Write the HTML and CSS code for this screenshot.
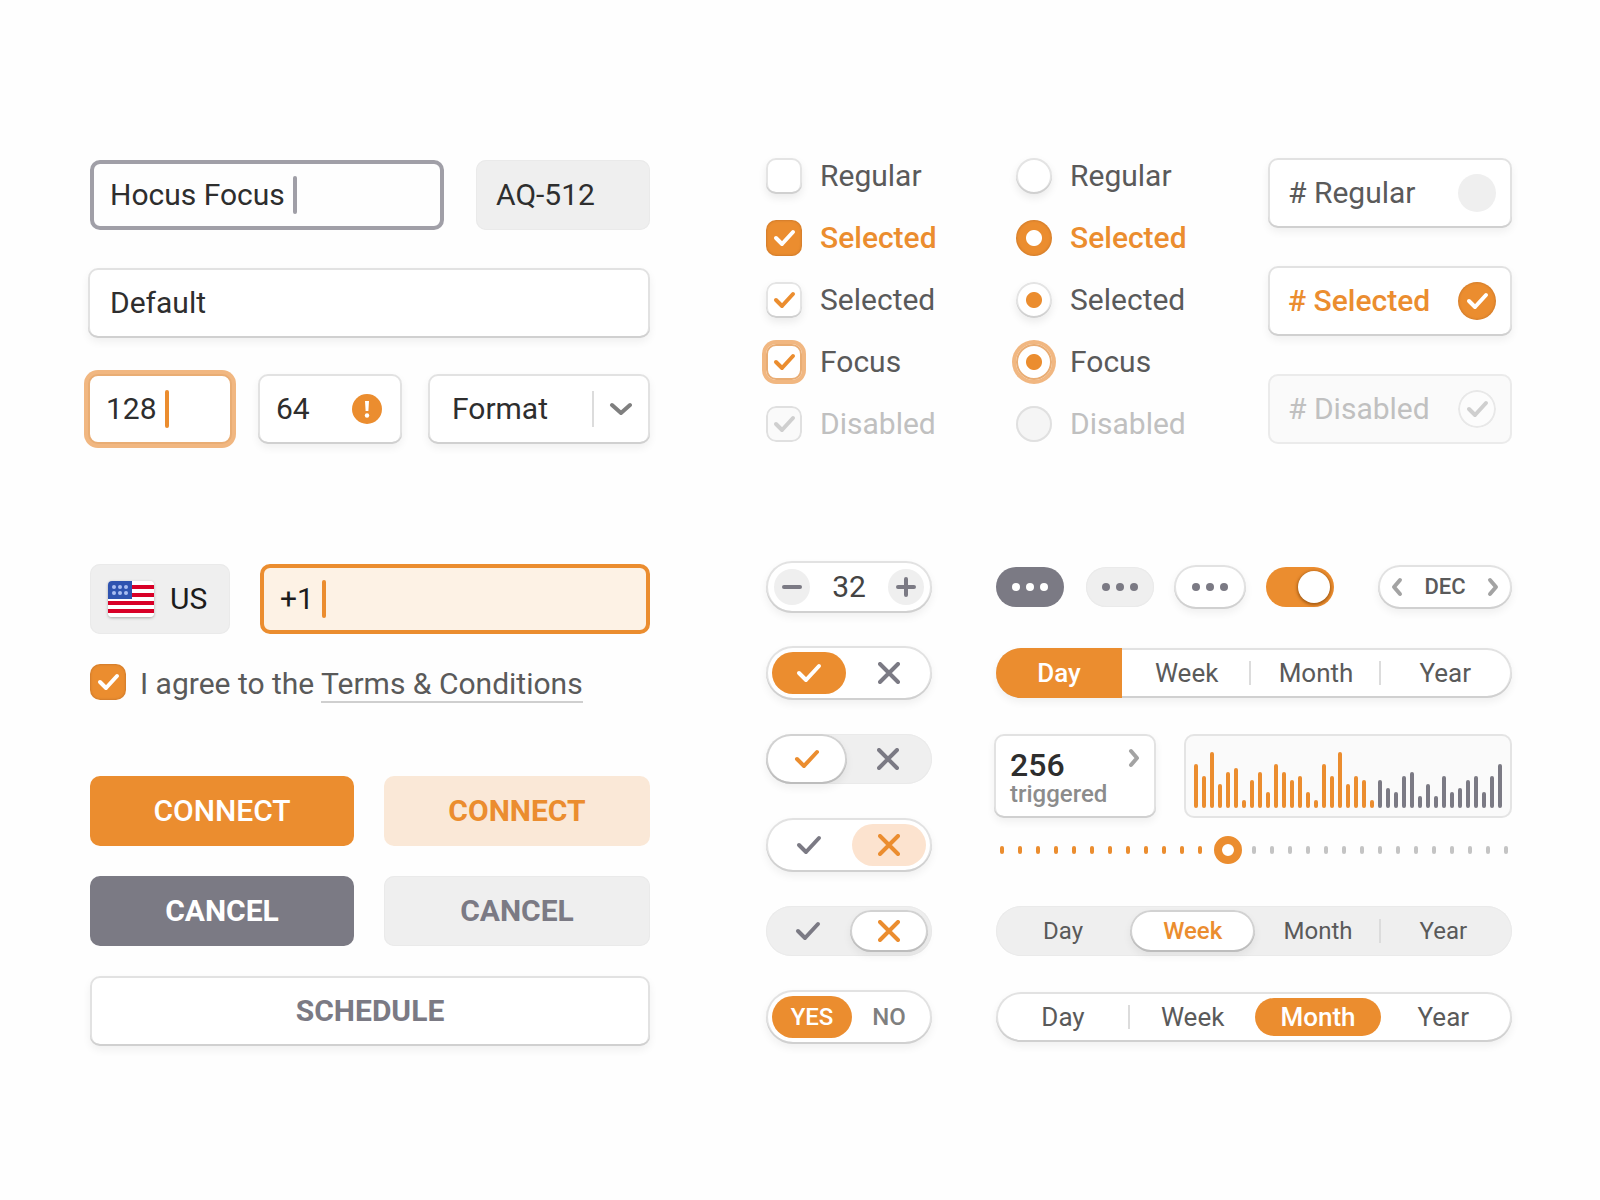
FILE: index.html
```
<!DOCTYPE html>
<html lang="en">
<head>
    <title>Form Controls</title>
    <meta charset="UTF-8">
    <meta name="viewport" content="width=device-width, initial-scale=1">
    <link rel="stylesheet" href="styles.css">
</head>
<body>

<!-- shared icons -->
<svg class="sprite" aria-hidden="true">
    <symbol id="check" viewBox="0 0 26 20"><path d="M3 10l7 7L23 3"/></symbol>
    <symbol id="cross" viewBox="0 0 22 22"><path d="M2 2l18 18M20 2L2 20"/></symbol>
    <symbol id="dots" viewBox="0 0 36 8"><circle cx="4" cy="4" r="4"/><circle cx="18" cy="4" r="4"/><circle cx="32" cy="4" r="4"/></symbol>
</svg>

<main class="page">

    <section class="fields">
        <div class="row row-names">
            <label class="field focus-gray">
                <input type="text" value="Hocus Focus" aria-label="Name">
                <span class="caret"></span>
            </label>
            <input class="input flat" type="text" value="AQ-512" aria-label="Code" readonly>
        </div>
        <input class="input input-wide raised" type="text" value="Default" aria-label="Default">
        <div class="row row-sizes">
            <label class="field raised focus-ring">
                <input type="text" value="128" aria-label="Width">
                <span class="caret"></span>
            </label>
            <label class="field raised invalid">
                <input type="text" value="64" aria-label="Height">
                <svg width="30" height="30" viewBox="0 0 30 30"><circle cx="15" cy="15" r="15" fill="#eb8d2f"/><path d="M13 7h4l-.6 10h-2.8z" fill="#fff"/><circle cx="15" cy="21.500" r="2.200" fill="#fff"/></svg>
            </label>
            <div class="select">
                <select class="input raised" aria-label="Format">
                    <option>Format</option>
                </select>
                <svg width="40" height="36" viewBox="0 0 40 36"><path d="M1 0v36" stroke="#dcdcdc" stroke-width="2"/><path d="M20 14l9 8 9-8" stroke="#7f7f7f" stroke-width="4" stroke-linecap="round" stroke-linejoin="round"/></svg>
            </div>
        </div>
    </section>

    <section class="choices">
        <div class="list">
            <label><input type="checkbox">Regular</label>
            <label class="on"><input class="solid" type="checkbox" checked>Selected</label>
            <label><input type="checkbox" checked>Selected</label>
            <label><input class="focus" type="checkbox" checked>Focus</label>
            <label class="off"><input type="checkbox" checked disabled>Disabled</label>
        </div>
        <div class="list">
            <label><input type="radio" name="r1">Regular</label>
            <label class="on"><input class="solid" type="radio" name="r2" checked>Selected</label>
            <label><input type="radio" name="r3" checked>Selected</label>
            <label><input class="focus" type="radio" name="r4" checked>Focus</label>
            <label class="off"><input type="radio" name="r5" disabled>Disabled</label>
        </div>
        <div class="cards">
            <label class="card raised"># Regular<input type="checkbox"></label>
            <label class="card raised on"># Selected<input type="checkbox" checked></label>
            <label class="card off"># Disabled<input type="checkbox" checked disabled></label>
        </div>
    </section>

    <form class="signup">
        <div class="row row-phone">
            <button class="country flat" type="button">
                <svg class="flag" width="46" height="36" viewBox="0 0 46 36">
                    <rect width="46" height="36" fill="#fff"/>
                    <path d="M0 6h46M0 14h46M0 22h46M0 30h46" stroke="#d80027" stroke-width="4"/>
                    <rect width="24" height="18" fill="#2f53b0"/>
                    <g fill="#a9bdf2"><circle cx="6" cy="6" r="2"/><circle cx="12" cy="6" r="2"/><circle cx="18" cy="6" r="2"/><circle cx="6" cy="12" r="2"/><circle cx="12" cy="12" r="2"/><circle cx="18" cy="12" r="2"/></g>
                </svg>
                US
            </button>
            <label class="field focus-orange">
                <input type="tel" value="+1" aria-label="Phone">
                <span class="caret"></span>
            </label>
        </div>
        <div class="agree">
            <input class="solid" id="agree" type="checkbox" checked>
            <label for="agree">I agree to the <a href="#">Terms &amp; Conditions</a></label>
        </div>
        <div class="buttons">
            <button class="btn btn-orange" type="button">CONNECT</button>
            <button class="btn btn-peach" type="button">CONNECT</button>
            <button class="btn btn-gray" type="button">CANCEL</button>
            <button class="btn btn-light flat" type="button">CANCEL</button>
            <button class="btn btn-wide raised" type="button">SCHEDULE</button>
        </div>
    </form>

    <section class="widgets">
        <div class="stepper raised">
            <button type="button" aria-label="Less"><svg width="20" height="20"><path d="M2 10h16"/></svg></button>
            <output>32</output>
            <button type="button" aria-label="More"><svg width="20" height="20"><path d="M2 10h16M10 2v16"/></svg></button>
        </div>
        <div class="toolbar">
            <button class="more more-dark" type="button" aria-label="More"><svg><use href="#dots"/></svg></button>
            <button class="more flat" type="button" aria-label="More"><svg><use href="#dots"/></svg></button>
            <button class="more more-big raised" type="button" aria-label="More"><svg><use href="#dots"/></svg></button>
            <input class="switch" type="checkbox" aria-label="Switch" checked>
            <div class="month raised">
                <button type="button" aria-label="Previous"><svg width="12" height="20"><path d="M9 3l-6 7 6 7"/></svg></button>
                DEC
                <button type="button" aria-label="Next"><svg width="12" height="20"><path d="M3 3l6 7-6 7"/></svg></button>
            </div>
        </div>

        <div class="toggle raised">
            <button class="pill-orange" type="button" aria-label="Yes"><svg class="check"><use href="#check"/></svg></button>
            <button type="button" aria-label="No"><svg class="cross"><use href="#cross"/></svg></button>
        </div>
        <div class="segments raised">
            <button class="seg-fill" type="button">Day</button>
            <button class="line" type="button">Week</button>
            <button class="line" type="button">Month</button>
            <button type="button">Year</button>
        </div>

        <div class="toggle toggle-flat toggle-left flat">
            <button class="pill-white raised" type="button" aria-label="Yes"><svg class="check"><use href="#check"/></svg></button>
            <button type="button" aria-label="No"><svg class="cross"><use href="#cross"/></svg></button>
        </div>
        <div class="history">
            <a class="stat raised" href="#">
                <strong>256</strong>
                <svg width="12" height="20"><path d="M3 3l6 7-6 7"/></svg>
                <span>triggered</span>
            </a>
            <div class="chart">
                <svg width="308" height="56" viewBox="0 0 308 56">
                    <path stroke="#eb8d2f" d="M2 54V14M10 54V26M18 54V2M26 54V34M34 54V22M42 54V18M50 54V50M58 54V30M66 54V22M74 54V42M82 54V14M90 54V22M98 54V30M106 54V26M114 54V42M122 54V50M130 54V14M138 54V26M146 54V2M154 54V34M162 54V26M170 54V30M178 54V50"/>
                    <path stroke="#7b7a84" d="M186 54V30M194 54V38M202 54V42M210 54V26M218 54V22M226 54V46M234 54V34M242 54V46M250 54V26M258 54V42M266 54V38M274 54V30M282 54V26M290 54V42M298 54V26M306 54V14"/>
                </svg>
            </div>
            <div class="slider">
                <svg width="100%" height="8">
                    <pattern id="done" width="18" height="8" patternUnits="userSpaceOnUse"><rect width="4" height="8" rx="2" fill="#eb8d2f"/></pattern>
                    <pattern id="todo" width="18" height="8" patternUnits="userSpaceOnUse"><rect width="4" height="8" rx="2" fill="#c4c4c4"/></pattern>
                    <rect width="100%" height="8" fill="url(#todo)"/>
                    <rect width="230" height="8" fill="#fefefe"/>
                    <rect width="230" height="8" fill="url(#done)"/>
                </svg>
                <input type="range" min="0" max="480" value="214" aria-label="Position">
            </div>
        </div>

        <div class="toggle raised">
            <button type="button" aria-label="Yes"><svg class="check"><use href="#check"/></svg></button>
            <button class="pill-peach" type="button" aria-label="No"><svg class="cross"><use href="#cross"/></svg></button>
        </div>

        <div class="toggle toggle-flat toggle-right flat">
            <button type="button" aria-label="Yes"><svg class="check"><use href="#check"/></svg></button>
            <button class="pill-white raised" type="button" aria-label="No"><svg class="cross"><use href="#cross"/></svg></button>
        </div>
        <div class="segments segments-inset segments-small flat">
            <button type="button">Day</button>
            <button class="seg-white raised" type="button">Week</button>
            <button class="line" type="button">Month</button>
            <button type="button">Year</button>
        </div>

        <div class="toggle toggle-text raised">
            <button class="pill-orange" type="button">YES</button>
            <button type="button">NO</button>
        </div>
        <div class="segments segments-inset raised">
            <button class="line" type="button">Day</button>
            <button type="button">Week</button>
            <button class="seg-orange" type="button">Month</button>
            <button type="button">Year</button>
        </div>
    </section>

</main>

</body>
</html>
```
FILE: styles.css
```
:root {
    --orange: #eb8d2f;
    --gray: #7b7a84;
    --text: #5a5a5a;
    --light: #efefef;
}

* {
    box-sizing: border-box;
}

body {
    margin: 0;
    background: #fefefe;
    color: var(--text);
    font: 30px/36px Roboto, "Liberation Sans", sans-serif;
}

button, input, select {
    margin: 0;
    padding: 0;
    border: 0;
    background: none;
    color: inherit;
    font: inherit;
}

input[type=checkbox], input[type=radio], input[type=range], select {
    appearance: none;
}

svg {
    display: block;
    flex: none;
    fill: none;
}

a {
    color: inherit;
    text-decoration: none;
}

.sprite {
    position: absolute;
    width: 0;
    height: 0;
}

.page {
    display: grid;
    grid-template-columns: minmax(0, 562fr) minmax(0, 746fr);
    column-gap: 116px;
    row-gap: 100px;
    padding: 158px 88px;
}

/* surfaces */

.raised {
    background: #fff;
    box-shadow: inset 0 -2px 0 #d0d0d0, inset 0 0 0 2px #e2e2e2, 0 4px 8px rgba(0, 0, 0, 0.06);
}

.flat {
    background: var(--light);
    box-shadow: inset 0 0 0 1px #eaeaea;
}

/* text fields */

.fields {
    display: flex;
    flex-direction: column;
    padding-top: 2px;
    color: #2e2e2e;
}

.row {
    display: grid;
}

.row-names {
    grid-template-columns: 354fr 174fr;
    gap: 32px;
    margin-bottom: 38px;
    padding-left: 2px;
}

.row-sizes {
    grid-template-columns: 144fr 144fr 222fr;
    gap: 26px;
    margin-top: 36px;
}

.row-phone {
    grid-template-columns: 140px 1fr;
    gap: 30px;
}

.input, .field {
    width: 100%;
    height: 70px;
    border-radius: 10px;
}

.input {
    padding: 0 20px 2px;
}

.input-wide {
    padding-left: 22px;
}

.field {
    display: flex;
    align-items: center;
    gap: 8px;
    padding: 0 18px;
}

.field input {
    field-sizing: content;
    outline: 0;
}

.caret {
    width: 4px;
    height: 38px;
    border-radius: 2px;
    background: var(--orange);
}

.focus-gray {
    border: 4px solid #a09fa7;
    padding: 0 16px;
}

.focus-gray .caret {
    background: #a09fa7;
}

.focus-orange {
    border: 4px solid var(--orange);
    padding: 0 16px;
    background: #fdf2e5;
}

.focus-ring {
    border: 2px solid #e9ad74;
    padding: 0 16px;
    box-shadow: 0 0 0 4px #f1b781;
}

.invalid {
    justify-content: space-between;
    padding-right: 20px;
}

.select {
    position: relative;
}

.select .input {
    padding: 0 24px;
}

.select svg {
    position: absolute;
    top: 17px;
    right: 18px;
    pointer-events: none;
}

/* checkboxes and radios */

.choices {
    display: grid;
    grid-template-columns: 250px 252px 1fr;
}

.list {
    display: flex;
    flex-direction: column;
    gap: 26px;
}

.list label {
    display: flex;
    align-items: center;
    gap: 18px;
}

.on {
    color: var(--orange);
    font-weight: 500;
}

.off {
    color: #c0c0c0;
}

.list input, .agree input {
    flex: none;
    width: 36px;
    height: 36px;
    border-radius: 10px;
    background: #fff center no-repeat;
    box-shadow: inset 0 -2px 0 #d0d0d0, inset 0 0 0 2px #e4e4e4, 0 4px 8px rgba(0, 0, 0, 0.08);
}

.list input[type=radio] {
    border-radius: 50%;
}

.list input:checked {
    background-image: url("data:image/svg+xml,%3Csvg xmlns='http://www.w3.org/2000/svg' width='36' height='36' fill='none' stroke='%23eb8d2f' stroke-width='4' stroke-linecap='round' stroke-linejoin='round'%3E%3Cpath d='M10 18l6 6 11-12'/%3E%3C/svg%3E");
}

.list input[type=radio]:checked {
    background-image: radial-gradient(circle, var(--orange) 7.5px, transparent 8.5px);
}

.list .solid:checked, .agree .solid, .on.card input {
    background-color: var(--orange);
    background-image: url("data:image/svg+xml,%3Csvg xmlns='http://www.w3.org/2000/svg' width='36' height='36' fill='none' stroke='%23fff' stroke-width='4' stroke-linecap='round' stroke-linejoin='round'%3E%3Cpath d='M10 18l6 6 11-12'/%3E%3C/svg%3E");
    box-shadow: inset 0 0 2px 1px rgba(170, 100, 40, 0.4);
}

.list .solid[type=radio]:checked {
    background-image: radial-gradient(circle, #fff 7.5px, transparent 8.5px);
}

.list .focus {
    box-shadow: 0 0 0 4px #f1b781, inset 0 0 0 2px #e9ad74;
}

.list input:disabled {
    background-color: #f5f5f5;
    box-shadow: inset 0 0 0 2px #e0e0e0;
}

.list input:disabled:checked, .off.card input {
    background-image: url("data:image/svg+xml,%3Csvg xmlns='http://www.w3.org/2000/svg' width='36' height='36' fill='none' stroke='%23cfcfcf' stroke-width='4' stroke-linecap='round' stroke-linejoin='round'%3E%3Cpath d='M10 18l6 6 11-12'/%3E%3C/svg%3E");
}

.list input[type=checkbox]:disabled {
    background-color: #fafafa;
}

.cards {
    display: flex;
    flex-direction: column;
    gap: 38px;
}

.card {
    display: flex;
    align-items: center;
    justify-content: space-between;
    height: 70px;
    padding: 0 16px 0 20px;
    border-radius: 10px;
}

.card input {
    width: 38px;
    height: 38px;
    border-radius: 50%;
    background: var(--light) center no-repeat;
}

.card.off {
    background: #fafafa;
    box-shadow: inset 0 0 0 2px #ebebeb;
}

.card.off input {
    background-color: #fcfcfc;
    box-shadow: inset 0 0 0 2px #e8e8e8;
}

/* sign up form */

.signup {
    padding: 20px 0 0 2px;
}

.signup .row {
    color: #1c1c1c;
}

.country {
    display: flex;
    align-items: center;
    gap: 16px;
    padding: 0 18px;
    border-radius: 10px;
}

.flag {
    border-radius: 4px;
    box-shadow: 0 1px 3px rgba(0, 0, 0, 0.3);
}

.agree {
    display: flex;
    align-items: center;
    gap: 14px;
    margin: 30px 0 76px;
}

.agree label {
    height: 32px;
}

.agree a {
    border-bottom: 2px solid #cfcfcf;
}

.buttons {
    display: grid;
    grid-template-columns: 264fr 266fr;
    gap: 30px;
}

.btn {
    height: 70px;
    border-radius: 10px;
    font-weight: 500;
    color: #fff;
}

.btn-orange {
    background: var(--orange);
}

.btn-peach {
    background: #fae8d7;
    color: var(--orange);
    font-weight: 700;
}

.btn-gray {
    background: var(--gray);
    font-weight: 700;
}

.btn-light, .btn-wide {
    color: var(--gray);
    font-weight: 700;
}

.btn-wide {
    grid-column: span 2;
}

/* pills */

.widgets {
    display: grid;
    grid-template-columns: 166px minmax(0, 1fr);
    grid-auto-rows: 86px;
    column-gap: 64px;
    align-items: center;
    font-size: 26px;
}

.widgets button {
    display: flex;
    align-items: center;
    justify-content: center;
}

.stepper, .stepper button, .toggle, .toggle button, .more, .switch, .month, .segments {
    border-radius: 27px;
}

.stepper, .toggle, .month button, .stat {
    stroke: var(--gray);
    stroke-width: 4px;
    stroke-linecap: round;
    stroke-linejoin: round;
}

.stepper {
    display: flex;
    align-items: center;
    justify-content: space-between;
    height: 52px;
    padding: 0 8px;
    color: #444;
    font-size: 30px;
}

.stepper button {
    width: 36px;
    height: 36px;
    background: var(--light);
}

.toggle {
    display: flex;
    gap: 6px;
    height: 54px;
    padding: 6px;
}

.toggle button {
    flex: 1;
}

.toggle-flat {
    gap: 0;
    height: 50px;
    padding: 0;
}

.toggle-left {
    padding-right: 4px;
}

.toggle-right {
    padding: 4px 4px 4px 0;
}

.toggle-right button:first-child {
    flex: 0 0 84px;
}

.toggle-text {
    gap: 0;
    color: #7f7f7f;
    font-size: 24px;
    font-weight: 500;
}

.toggle-text .pill-orange {
    flex: 0 0 80px;
    color: #fff;
}

.toggle .pill-orange {
    background: var(--orange);
    stroke: #fff;
}

.toggle .pill-peach {
    background: #fce3cf;
    stroke: var(--orange);
}

.toggle .pill-white {
    stroke: var(--orange);
}

.toggle-flat .pill-white, .seg-white {
    box-shadow: inset 0 -2px 0 #bdbdbd, inset 0 0 0 2px #d2d2d2, 0 4px 8px rgba(0, 0, 0, 0.06);
}

.check {
    width: 26px;
    height: 20px;
}

.cross {
    width: 22px;
    height: 22px;
}

.toolbar {
    display: flex;
    align-items: center;
    gap: 20px;
}

.more {
    width: 68px;
    height: 40px;
    color: var(--gray);
}

.more-dark {
    margin-right: 2px;
    background: var(--gray);
    color: #fff;
}

.more-big {
    width: 72px;
    height: 44px;
}

.more svg {
    width: 36px;
    height: 8px;
    fill: currentColor;
}

.switch {
    display: flex;
    justify-content: flex-end;
    width: 68px;
    height: 40px;
    padding: 4px;
    background: var(--orange);
}

.switch::before {
    content: "";
    width: 32px;
    height: 32px;
    border-radius: 50%;
    background: #fff;
    box-shadow: 0 1px 3px 1px rgba(120, 60, 0, 0.6);
}

.month {
    display: flex;
    align-items: center;
    justify-content: space-between;
    width: 134px;
    height: 44px;
    margin-left: auto;
    padding: 0 13px;
    font-size: 22px;
    font-weight: 500;
}

.month button, .stat {
    stroke: #a3a3a3;
}

.segments {
    display: grid;
    grid-template-columns: 126px 1fr 1fr 1fr;
    height: 50px;
    padding-right: 2px;
    overflow: hidden;
}

.segments-inset {
    grid-template-columns: 134px 1fr 1fr 1fr;
    padding-right: 6px;
    overflow: visible;
}

.segments-small {
    font-size: 24px;
}

.segments button {
    position: relative;
}

.line::after {
    content: "";
    position: absolute;
    right: 0;
    width: 2px;
    height: 24px;
    background: #dcdcdc;
}

.seg-fill, .seg-orange {
    background: var(--orange);
    color: #fff;
    font-weight: 500;
}

.seg-white {
    margin: 4px 0;
    border-radius: 21px;
    color: var(--orange);
    font-weight: 500;
}

.seg-orange {
    margin: 6px 0;
    border-radius: 19px;
}

/* stat, chart and slider */

.history {
    grid-row: span 2;
    align-self: start;
    display: grid;
    grid-template-columns: 162px 1fr;
    gap: 18px 28px;
    margin-left: -2px;
    padding-top: 18px;
}

.stat {
    display: grid;
    grid-template-columns: 1fr auto;
    align-content: center;
    height: 84px;
    padding: 2px 16px 0;
    border-radius: 10px;
    color: #8c8c8c;
    font-size: 24px;
    line-height: 24px;
    font-weight: 500;
}

.stat strong {
    color: #2e2e2e;
    font-size: 32px;
    line-height: 34px;
    font-weight: 500;
}

.chart {
    padding: 18px 10px 10px;
    border-radius: 10px;
    background: #fafafa;
    box-shadow: inset 0 0 0 2px #e4e4e4;
    stroke-width: 4px;
    stroke-linecap: round;
}

.slider {
    grid-column: span 2;
    display: grid;
    align-items: center;
    margin: 0 4px 0 6px;
}

.slider > * {
    grid-area: 1 / 1;
    min-width: 0;
}

.slider input {
    position: relative;
    width: 100%;
    height: 28px;
}

.slider input::-webkit-slider-thumb {
    appearance: none;
    width: 28px;
    height: 28px;
    border: 8px solid var(--orange);
    border-radius: 50%;
    background: #fff;
}
```
